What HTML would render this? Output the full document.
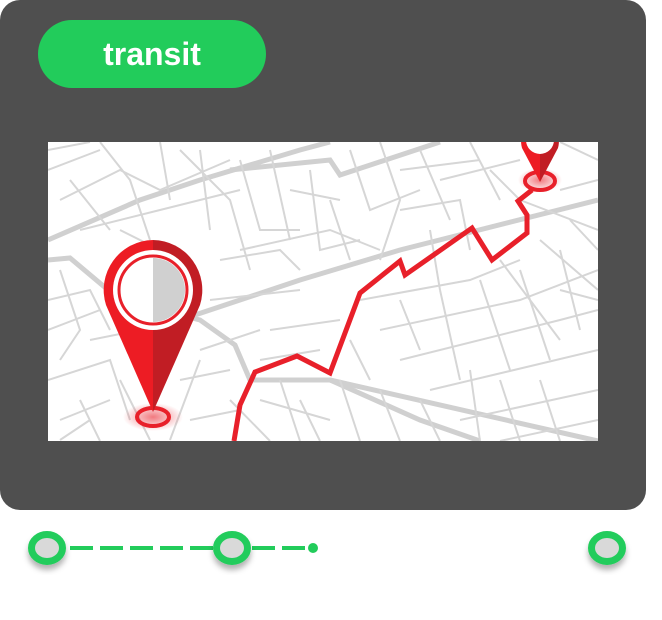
<!DOCTYPE html>
<html><head><style>
html,body{margin:0;padding:0;background:#fff;width:662px;height:620px;overflow:hidden;font-family:"Liberation Sans",sans-serif}
.card{position:absolute;left:0;top:0;width:646px;height:510px;background:#4f4f4f;border-radius:20px}
.pill{position:absolute;left:38px;top:20px;width:228px;height:68px;background:#22cc5b;border-radius:34px;color:#fff;font-weight:bold;font-size:32px;line-height:68px;text-align:center}
.map{position:absolute;left:48px;top:142px;width:550px;height:299px;background:#fff;overflow:hidden}
</style></head><body>
<div class="card"></div>
<div class="pill">transit</div>
<div class="map">
<svg width="550" height="299" viewBox="48 142 550 299" xmlns="http://www.w3.org/2000/svg">
<defs><radialGradient id="g"><stop offset="0" stop-color="#e8202a" stop-opacity=".6"/><stop offset="1" stop-color="#e8202a" stop-opacity="0"/></radialGradient></defs>
<g stroke="#d0d0d0" stroke-width="5" fill="none">
<path d="M48 260 L70 258 L120 300 L200 320 L235 345 L250 380 L330 380 L420 420 L480 441"/>
<path d="M48 240 L140 200 L200 180 L300 150 L330 142"/>
<path d="M180 320 L300 280 L400 250 L598 200"/>
<path d="M230 170 L330 160 L340 175 L440 142"/>
<path d="M330 380 L598 441"/>
</g>
<g stroke="#d6d6d6" stroke-width="2" fill="none">
<path d="M48 170 L100 150 M60 200 L120 170 L160 190 L230 160 M80 230 L160 210 L240 190 M48 330 L100 310 M48 380 L110 360 L130 420 M60 420 L110 400 M48 300 L90 290 L110 330"/>
<path d="M100 142 L130 180 L150 240 M160 142 L170 200 M200 150 L210 230 M240 160 L260 230 L300 230 M270 150 L290 240 M310 170 L320 250 L360 240"/>
<path d="M240 250 L330 230 L380 250 M210 300 L300 290 M200 350 L260 330 M180 380 L230 370 M190 420 L240 410 M170 440 L200 360"/>
<path d="M380 142 L400 200 L380 260 M420 150 L450 220 M440 180 L520 160 M470 142 L500 200 M560 142 L598 160 M560 190 L598 180"/>
<path d="M360 300 L470 280 L520 260 M380 330 L520 300 L598 270 M400 360 L560 320 L598 310 M430 390 L598 350 M460 420 L598 390 M500 441 L598 420"/>
<path d="M400 300 L420 350 M440 290 L460 380 M480 280 L510 370 M520 270 L550 360 M560 250 L580 330 M540 240 L598 290 M500 260 L560 340"/>
<path d="M340 380 L360 441 M380 390 L400 441 M420 400 L440 441 M280 380 L300 441 M260 400 L330 420"/>
<path d="M48 150 L90 142 M70 180 L110 230 M120 230 L180 260 L200 300 M60 270 L80 330 L60 360 M90 340 L140 330 M80 400 L100 441 M120 380 L150 440 M60 440 L90 420"/>
<path d="M180 150 L230 200 L250 270 M220 260 L280 250 L300 270 M290 190 L340 200 M330 200 L350 260 M350 150 L370 210 L420 190 M400 210 L460 200 L470 250 M430 230 L440 290"/>
<path d="M270 330 L340 320 M260 360 L320 350 M350 340 L370 380 M230 400 L270 441 M300 400 L320 441 M500 380 L520 441 M540 380 L560 441 M470 370 L480 441"/>
<path d="M570 220 L598 250 M560 290 L598 300 M520 200 L598 230 M490 170 L520 200 M400 170 L480 160"/>
</g>
<polyline points="234,441 240,405 255,372 297,356 330,373 360,293 400,261 405,275 472,228 492,260 527,233 527,215 518,201 532,190" fill="none" stroke="#e8202a" stroke-width="5" stroke-linejoin="miter"/>
<ellipse cx="153" cy="417" rx="30" ry="14" fill="url(#g)"/>
<ellipse cx="153" cy="417" rx="16" ry="9" fill="none" stroke="#e8202a" stroke-width="4"/>
<path d="M153 240 A50 50 0 0 0 106 305 L153 412 Z" fill="#ed1c24"/>
<path d="M153 240 A50 50 0 0 1 200 305 L153 412 Z" fill="#c11d24"/>
<circle cx="153" cy="290" r="40" fill="#fff"/>
<circle cx="153" cy="290" r="34" fill="none" stroke="#e8202a" stroke-width="3"/>
<path d="M153 258 A32 32 0 0 1 153 322 Z" fill="#d0d0d0"/>
<path d="M153 258 A32 32 0 0 0 153 322 Z" fill="#fff"/>
<ellipse cx="540" cy="180" rx="22" ry="12" fill="url(#g)"/>
<ellipse cx="540" cy="181" rx="15" ry="9" fill="none" stroke="#e8202a" stroke-width="4"/>
<path d="M540 120 A22 22 0 0 0 522 148 L540 182 Z" fill="#ed1c24"/>
<path d="M540 120 A22 22 0 0 1 558 148 L540 182 Z" fill="#c11d24"/>
<circle cx="540" cy="140" r="14" fill="#fff"/>
</svg>
</div>
<svg width="662" height="620" style="position:absolute;left:0;top:0" xmlns="http://www.w3.org/2000/svg">
<defs><filter id="s" x="-50%" y="-50%" width="200%" height="200%"><feDropShadow dx="0" dy="5" stdDeviation="3" flood-color="#000" flood-opacity=".3"/></filter></defs>
<line x1="70" y1="548" x2="216" y2="548" stroke="#22cc5b" stroke-width="4" stroke-dasharray="23,7"/>
<line x1="252" y1="548" x2="308" y2="548" stroke="#22cc5b" stroke-width="4" stroke-dasharray="23,7"/>
<ellipse cx="313" cy="548" rx="5" ry="5" fill="#22cc5b"/>
<g fill="#d9d9d9" stroke="#22cc5b" stroke-width="7" filter="url(#s)">
<ellipse cx="47" cy="548" rx="15.5" ry="13.5"/>
<ellipse cx="232" cy="548" rx="15.5" ry="13.5"/>
<ellipse cx="607" cy="548" rx="15.5" ry="13.5"/>
</g>
</svg>
</body></html>
